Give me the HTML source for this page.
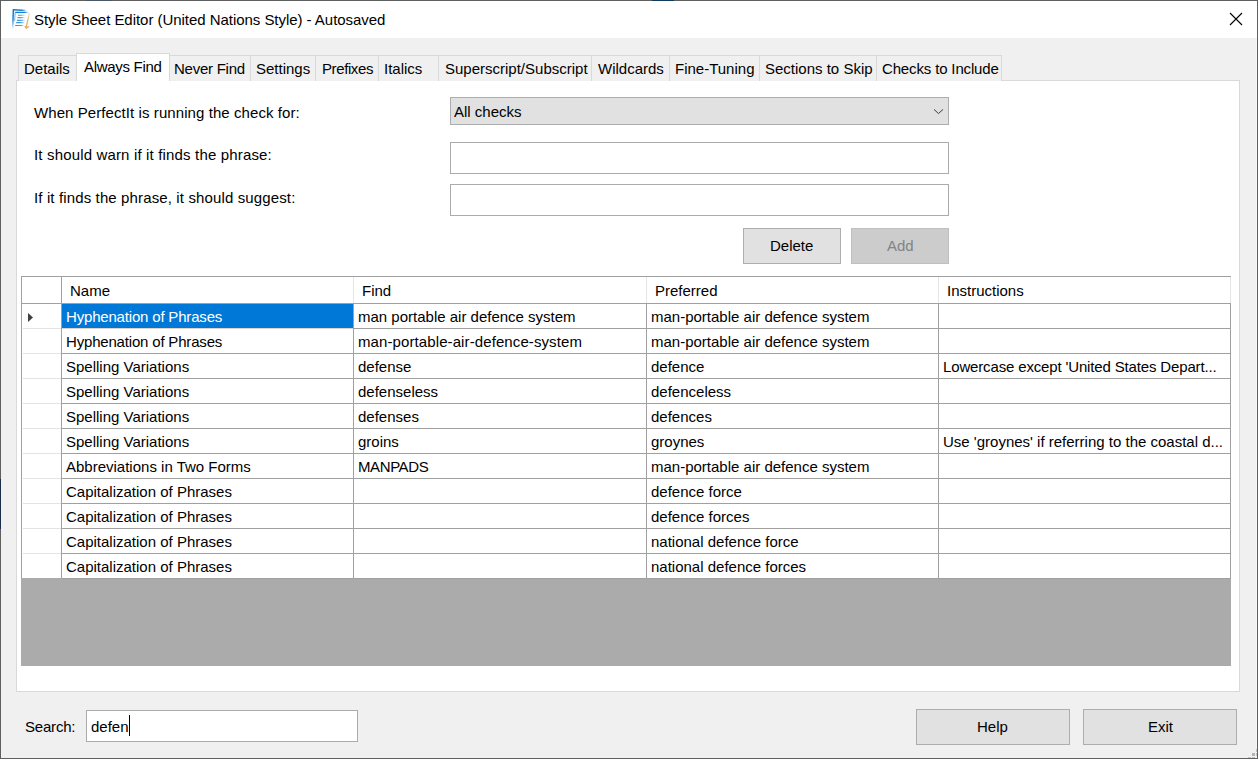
<!DOCTYPE html>
<html><head><meta charset="utf-8">
<style>
*{box-sizing:border-box;margin:0;padding:0}
html,body{width:1258px;height:759px;overflow:hidden;background:#f0f0f0}
body{position:relative;font-family:"Liberation Sans",sans-serif;font-size:15px;color:#000}
.a{position:absolute}
.t{position:absolute;font-size:15px;line-height:17px;white-space:nowrap}
.win{position:absolute;left:0;top:0;width:1258px;height:759px;border:1px solid #5f5f5f;background:#f0f0f0}
.title{position:absolute;left:1px;top:1px;width:1256px;height:37px;background:#fff}
.tab{position:absolute;top:55px;height:26px;background:#f0f0f0;border:1px solid #d9d9d9;border-bottom:none}
.tabsel{top:53px;height:28px;background:#fff;z-index:2}
.page{position:absolute;left:16px;top:80px;width:1224px;height:612px;background:#fff;border:1px solid #d9d9d9}
.btn{position:absolute;background:#e1e1e1;border:1px solid #adadad}
.tb{position:absolute;background:#fff;border:1px solid #ababab}
.hl{position:absolute;height:1px;background:#a0a0a0}
.vl{position:absolute;width:1px;background:#a0a0a0}
</style></head><body>
<div class="win"></div>
<div class="title"></div>
<div class="a" style="left:0;top:479px;width:1px;height:50px;background:#1c2c4c"></div>
<div class="a" style="left:652px;top:0;width:22px;height:1px;background:#0e3a5c"></div>
<div class="a" style="left:86px;top:0;width:26px;height:1px;background:#4a5868"></div>
<!-- icon -->
<svg class="a" style="left:8px;top:6px" width="26" height="26" viewBox="8 6 26 26">
  <defs>
    <linearGradient id="gb1" gradientUnits="userSpaceOnUse" x1="13" x2="27" y1="0" y2="0"><stop offset="0" stop-color="#0b78cf"/><stop offset="0.65" stop-color="#1883d6"/><stop offset="1" stop-color="#3a9be0" stop-opacity="0"/></linearGradient>
    <linearGradient id="gb2" gradientUnits="userSpaceOnUse" x1="15" x2="29" y1="0" y2="0"><stop offset="0" stop-color="#0b78cf"/><stop offset="0.7" stop-color="#1883d6"/><stop offset="1" stop-color="#3a9be0" stop-opacity="0"/></linearGradient>
    <linearGradient id="gl" gradientUnits="userSpaceOnUse" x1="15" x2="26" y1="0" y2="0"><stop offset="0" stop-color="#2b8ed8"/><stop offset="0.55" stop-color="#4aa2e0"/><stop offset="1" stop-color="#8cc6ee" stop-opacity="0"/></linearGradient>
    <linearGradient id="gv" gradientUnits="userSpaceOnUse" x1="0" x2="0" y1="9" y2="29"><stop offset="0" stop-color="#0b78cf"/><stop offset="0.55" stop-color="#2088d6"/><stop offset="1" stop-color="#5aaee6" stop-opacity="0.1"/></linearGradient>
    <linearGradient id="go" gradientUnits="userSpaceOnUse" x1="0" x2="0" y1="12" y2="29"><stop offset="0" stop-color="#e8c28a" stop-opacity="0.3"/><stop offset="0.5" stop-color="#e2b46c"/><stop offset="1" stop-color="#e0ae60"/></linearGradient>
  </defs>
  <path d="M13 9.7 L26.8 10.5" stroke="url(#gb1)" stroke-width="1.5" fill="none"/>
  <path d="M15.2 12.4 L28.8 12.3" stroke="url(#gb2)" stroke-width="1.2" fill="none"/>
  <path d="M13.4 9.3 L12.7 28.6" stroke="url(#gv)" stroke-width="1.5" fill="none"/>
  <path d="M15.2 12.5 L14.6 21" stroke="url(#gv)" stroke-width="1" fill="none" opacity="0.6"/>
  <path d="M18 15.3 H26 M17.6 17.6 H25.5 M17 20.4 H25 M16.2 22.6 H24.5 M15.2 25.5 H23.5" stroke="url(#gl)" stroke-width="1.1" fill="none"/>
  <path d="M29.4 13.2 L26.2 27" stroke="url(#go)" stroke-width="1.3" fill="none"/>
  <path d="M24 26.2 L29.8 26.2 L26.3 29.2 Z" fill="#e2b26a"/>
</svg>
<div class="t" style="left:34px;top:11px;letter-spacing:-0.04px">Style Sheet Editor (United Nations Style) - Autosaved</div>
<!-- close X -->
<svg class="a" style="left:1229px;top:12px" width="14" height="14" viewBox="0 0 14 14"><path d="M1 1 L13 13 M13 1 L1 13" stroke="#000" stroke-width="1.1" fill="none"/></svg>

<!-- page -->
<div class="page"></div>
<!-- tabs -->
<div class="tab" style="left:18px;width:59px"></div>
<div class="tab" style="left:169px;width:82px"></div>
<div class="tab" style="left:250px;width:66px"></div>
<div class="tab" style="left:315px;width:64px"></div>
<div class="tab" style="left:378px;width:61px"></div>
<div class="tab" style="left:438px;width:154px"></div>
<div class="tab" style="left:591px;width:79px"></div>
<div class="tab" style="left:669px;width:91px"></div>
<div class="tab" style="left:759px;width:118px"></div>
<div class="tab" style="left:876px;width:126px"></div>
<div class="tab tabsel" style="left:76px;width:94px"></div>
<div class="t" style="left:24px;top:60px">Details</div>
<div class="t" style="left:84px;top:58px;z-index:3;letter-spacing:-0.3px">Always Find</div>
<div class="t" style="left:174px;top:60px;letter-spacing:-0.25px">Never Find</div>
<div class="t" style="left:256px;top:60px">Settings</div>
<div class="t" style="left:322px;top:60px;letter-spacing:-0.4px">Prefixes</div>
<div class="t" style="left:384px;top:60px">Italics</div>
<div class="t" style="left:445px;top:60px">Superscript/Subscript</div>
<div class="t" style="left:598px;top:60px">Wildcards</div>
<div class="t" style="left:675px;top:60px">Fine-Tuning</div>
<div class="t" style="left:765px;top:60px">Sections to Skip</div>
<div class="t" style="left:882px;top:60px;letter-spacing:-0.15px">Checks to Include</div>

<!-- form -->
<div class="t" style="left:34px;top:104px;letter-spacing:0.08px">When PerfectIt is running the check for:</div>
<div class="t" style="left:34px;top:146px;letter-spacing:0.16px">It should warn if it finds the phrase:</div>
<div class="t" style="left:34px;top:189px;letter-spacing:0.13px">If it finds the phrase, it should suggest:</div>
<div class="btn" style="left:450px;top:97px;width:499px;height:28px"></div>
<div class="t" style="left:454px;top:103px">All checks</div>
<svg class="a" style="left:932px;top:106px" width="13" height="10" viewBox="0 0 13 10"><path d="M2 3.4 L6.5 7.6 L11 3.4" stroke="#3a3a3a" stroke-width="1" fill="none"/></svg>
<div class="tb" style="left:450px;top:142px;width:499px;height:32px"></div>
<div class="tb" style="left:450px;top:184px;width:499px;height:32px"></div>
<div class="btn" style="left:743px;top:228px;width:98px;height:36px"></div>
<div class="t" style="left:770px;top:237px">Delete</div>
<div class="btn" style="left:851px;top:228px;width:98px;height:36px;background:#cccccc;border-color:#bfbfbf"></div>
<div class="t" style="left:887px;top:237px;color:#838383">Add</div>

<!-- grid -->
<!--GRID-->
<div class="a" style="left:21px;top:578px;width:1210px;height:88px;background:#ababab"></div>
<div class="hl" style="left:21px;top:276px;width:1210px"></div>
<div class="vl" style="left:21px;top:276px;height:302px"></div>
<div class="hl" style="left:21px;top:303px;width:1210px"></div>
<div class="vl" style="left:61px;top:276px;height:302px"></div>
<div class="a" style="left:353px;top:277px;width:1px;height:26px;background:#e5e5e5"></div>
<div class="a" style="left:646px;top:277px;width:1px;height:26px;background:#e5e5e5"></div>
<div class="a" style="left:938px;top:277px;width:1px;height:26px;background:#e5e5e5"></div>
<div class="a" style="left:1230px;top:277px;width:1px;height:26px;background:#e5e5e5"></div>
<div class="a" style="left:62px;top:304px;width:291px;height:24px;background:#0078d7"></div>
<div class="a" style="left:62px;top:328px;width:291px;height:1px;background:#dcd3ca"></div>
<div class="hl" style="left:353px;top:328px;width:878px"></div>
<div class="a" style="left:23px;top:328px;width:38px;height:1px;background:#e3e3e3"></div>
<div class="hl" style="left:62px;top:353px;width:1169px"></div>
<div class="a" style="left:23px;top:353px;width:38px;height:1px;background:#e3e3e3"></div>
<div class="hl" style="left:62px;top:378px;width:1169px"></div>
<div class="a" style="left:23px;top:378px;width:38px;height:1px;background:#e3e3e3"></div>
<div class="hl" style="left:62px;top:403px;width:1169px"></div>
<div class="a" style="left:23px;top:403px;width:38px;height:1px;background:#e3e3e3"></div>
<div class="hl" style="left:62px;top:428px;width:1169px"></div>
<div class="a" style="left:23px;top:428px;width:38px;height:1px;background:#e3e3e3"></div>
<div class="hl" style="left:62px;top:453px;width:1169px"></div>
<div class="a" style="left:23px;top:453px;width:38px;height:1px;background:#e3e3e3"></div>
<div class="hl" style="left:62px;top:478px;width:1169px"></div>
<div class="a" style="left:23px;top:478px;width:38px;height:1px;background:#e3e3e3"></div>
<div class="hl" style="left:62px;top:503px;width:1169px"></div>
<div class="a" style="left:23px;top:503px;width:38px;height:1px;background:#e3e3e3"></div>
<div class="hl" style="left:62px;top:528px;width:1169px"></div>
<div class="a" style="left:23px;top:528px;width:38px;height:1px;background:#e3e3e3"></div>
<div class="hl" style="left:62px;top:553px;width:1169px"></div>
<div class="a" style="left:23px;top:553px;width:38px;height:1px;background:#e3e3e3"></div>
<div class="hl" style="left:62px;top:578px;width:1169px"></div>
<div class="vl" style="left:353px;top:303px;height:275px"></div>
<div class="vl" style="left:646px;top:303px;height:275px"></div>
<div class="vl" style="left:938px;top:303px;height:275px"></div>
<div class="vl" style="left:1230px;top:303px;height:275px"></div>
<svg class="a" style="left:27px;top:312px" width="8" height="11" viewBox="0 0 8 11"><path d="M1 1 L6 5.5 L1 10 Z" fill="#404040"/></svg>
<div class="t" style="left:70px;top:282px">Name</div>
<div class="t" style="left:362px;top:282px">Find</div>
<div class="t" style="left:655px;top:282px">Preferred</div>
<div class="t" style="left:947px;top:282px">Instructions</div>
<div class="t" style="left:66px;top:308px;color:#fff;letter-spacing:-0.18px">Hyphenation of Phrases</div>
<div class="t" style="left:358px;top:308px">man portable air defence system</div>
<div class="t" style="left:651px;top:308px">man-portable air defence system</div>
<div class="t" style="left:66px;top:333px;letter-spacing:-0.18px">Hyphenation of Phrases</div>
<div class="t" style="left:358px;top:333px;letter-spacing:0.1px">man-portable-air-defence-system</div>
<div class="t" style="left:651px;top:333px">man-portable air defence system</div>
<div class="t" style="left:66px;top:358px">Spelling Variations</div>
<div class="t" style="left:358px;top:358px">defense</div>
<div class="t" style="left:651px;top:358px">defence</div>
<div class="t" style="left:943px;top:358px;letter-spacing:-0.15px">Lowercase except &#39;United States Depart...</div>
<div class="t" style="left:66px;top:383px">Spelling Variations</div>
<div class="t" style="left:358px;top:383px">defenseless</div>
<div class="t" style="left:651px;top:383px">defenceless</div>
<div class="t" style="left:66px;top:408px">Spelling Variations</div>
<div class="t" style="left:358px;top:408px">defenses</div>
<div class="t" style="left:651px;top:408px">defences</div>
<div class="t" style="left:66px;top:433px">Spelling Variations</div>
<div class="t" style="left:358px;top:433px">groins</div>
<div class="t" style="left:651px;top:433px">groynes</div>
<div class="t" style="left:943px;top:433px">Use &#39;groynes&#39; if referring to the coastal d...</div>
<div class="t" style="left:66px;top:458px">Abbreviations in Two Forms</div>
<div class="t" style="left:358px;top:458px;letter-spacing:-0.4px">MANPADS</div>
<div class="t" style="left:651px;top:458px">man-portable air defence system</div>
<div class="t" style="left:66px;top:483px">Capitalization of Phrases</div>
<div class="t" style="left:651px;top:483px">defence force</div>
<div class="t" style="left:66px;top:508px">Capitalization of Phrases</div>
<div class="t" style="left:651px;top:508px">defence forces</div>
<div class="t" style="left:66px;top:533px">Capitalization of Phrases</div>
<div class="t" style="left:651px;top:533px">national defence force</div>
<div class="t" style="left:66px;top:558px">Capitalization of Phrases</div>
<div class="t" style="left:651px;top:558px">national defence forces</div>
<!--/GRID-->

<!-- bottom -->
<div class="t" style="left:25px;top:718px;letter-spacing:-0.2px">Search:</div>
<div class="tb" style="left:86px;top:710px;width:272px;height:32px"></div>
<div class="t" style="left:91px;top:718px">defen</div>
<div class="a" style="left:129px;top:715px;width:1px;height:21px;background:#000"></div>
<div class="btn" style="left:916px;top:709px;width:154px;height:36px"></div>
<div class="t" style="left:977px;top:718px">Help</div>
<div class="btn" style="left:1083px;top:709px;width:154px;height:36px"></div>
<div class="t" style="left:1148px;top:718px">Exit</div>
<!-- size grip -->
<div class="a" style="left:1256px;top:38px;width:1px;height:720px;background:#f6f6f6"></div>
<div class="a" style="left:1252px;top:753px;width:3px;height:3px;background:#b4b4b4"></div>
<div class="a" style="left:1256px;top:749px;width:1px;height:3px;background:#c4c4c4"></div>
<div class="a" style="left:1256px;top:753px;width:1px;height:3px;background:#c4c4c4"></div>
<div class="a" style="left:1248px;top:757px;width:3px;height:1px;background:#c4c4c4"></div>
<div class="a" style="left:1252px;top:757px;width:3px;height:1px;background:#c4c4c4"></div>
</body></html>
